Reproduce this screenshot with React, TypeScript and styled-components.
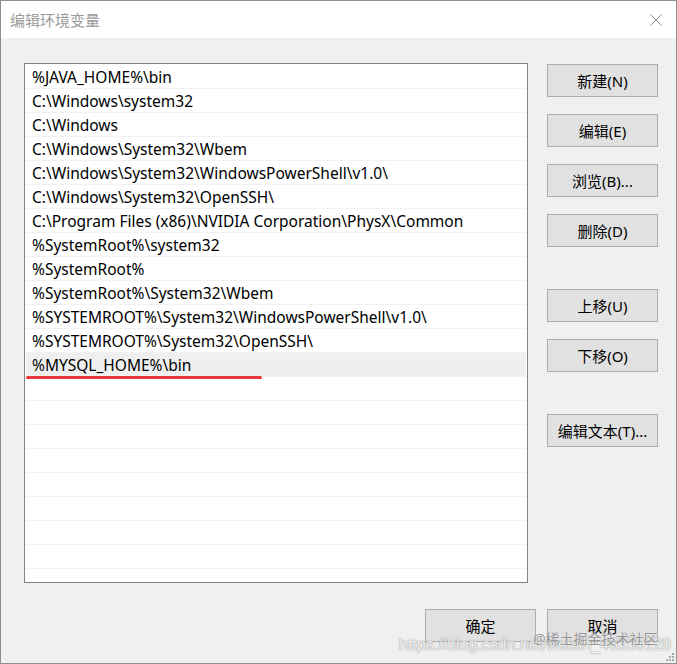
import styled, { createGlobalStyle } from 'styled-components';

const GlobalStyle = createGlobalStyle`
  html, body {
    margin: 0;
    padding: 0;
    background: #ffffff;
  }
  * {
    box-sizing: border-box;
  }
`;

const paths = [
  '%JAVA_HOME%\\bin',
  'C:\\Windows\\system32',
  'C:\\Windows',
  'C:\\Windows\\System32\\Wbem',
  'C:\\Windows\\System32\\WindowsPowerShell\\v1.0\\',
  'C:\\Windows\\System32\\OpenSSH\\',
  'C:\\Program Files (x86)\\NVIDIA Corporation\\PhysX\\Common',
  '%SystemRoot%\\system32',
  '%SystemRoot%',
  '%SystemRoot%\\System32\\Wbem',
  '%SYSTEMROOT%\\System32\\WindowsPowerShell\\v1.0\\',
  '%SYSTEMROOT%\\System32\\OpenSSH\\',
  '%MYSQL_HOME%\\bin',
];

const TOTAL_ROWS = 22;
const SELECTED = 12;

const sideButtons = [
  { label: '新建(N)', gap: 1 },
  { label: '编辑(E)', gap: 17 },
  { label: '浏览(B)...', gap: 17 },
  { label: '删除(D)', gap: 17 },
  { label: '上移(U)', gap: 42 },
  { label: '下移(O)', gap: 17 },
  { label: '编辑文本(T)...', gap: 42 },
];

export default function App() {
  const rows = Array.from({ length: TOTAL_ROWS }, (_, i) => paths[i] ?? '');

  return (
    <>
      <GlobalStyle />
      <Window>
        <TitleBar>
          <Title>编辑环境变量</Title>
          <CloseButton>
            <svg width="12" height="12" viewBox="0 0 12 12">
              <path d="M0.5 0.5 L11.5 11.5 M11.5 0.5 L0.5 11.5" stroke="#8a8a8a" strokeWidth="1" fill="none" />
            </svg>
          </CloseButton>
        </TitleBar>

        <Body>
          <Main>
            <ListBox>
              {rows.map((text, i) => (
                <Row key={i} selected={i === SELECTED}>
                  {text}
                  {i === SELECTED && <RedMark />}
                </Row>
              ))}
            </ListBox>

            <SideColumn>
              {sideButtons.map((b) => (
                <Button key={b.label} gap={b.gap}>
                  {b.label}
                </Button>
              ))}
            </SideColumn>
          </Main>

          <Footer>
            <Button gap={0}>确定</Button>
            <Button gap={0}>取消</Button>
          </Footer>
        </Body>

        {/* blog watermarks baked into the screenshot */}
        <Watermark>https://blog.csdn.net/weixin_46330128</Watermark>
        <Brand>@稀土掘金技术社区</Brand>
        <Grip>
          <svg width="10" height="10" viewBox="0 0 10 10">
            <rect x="7" y="1" width="2" height="2" fill="#a8a8a8" />
            <rect x="4" y="4" width="2" height="2" fill="#a8a8a8" />
            <rect x="7" y="4" width="2" height="2" fill="#a8a8a8" />
            <rect x="1" y="7" width="2" height="2" fill="#a8a8a8" />
            <rect x="4" y="7" width="2" height="2" fill="#a8a8a8" />
            <rect x="7" y="7" width="2" height="2" fill="#a8a8a8" />
          </svg>
        </Grip>
      </Window>
    </>
  );
}

const Window = styled.div`
  position: relative;
  width: 677px;
  height: 664px;
  border: 1px solid #8f8f8f;
  background-color: #f0f0f0;
  display: flex;
  flex-direction: column;
  overflow: hidden;
  font-family: 'Noto Sans', 'Noto Sans CJK SC', sans-serif;
`;

const TitleBar = styled.div`
  height: 37px;
  flex-shrink: 0;
  background-color: #ffffff;
  display: flex;
  align-items: center;
  justify-content: space-between;
  padding: 0 14px 0 9px;
`;

const Title = styled.div`
  font-size: 15px;
  color: #9a9a9a;
  font-family: 'Noto Sans CJK SC', sans-serif;
`;

const CloseButton = styled.div`
  display: flex;
  align-items: center;
  padding-top: 1px;
`;

const Body = styled.div`
  flex: 1;
  display: flex;
  flex-direction: column;
  padding: 25px 18px 0 23px;
`;

const Main = styled.div`
  display: flex;
  gap: 19px;
`;

const ListBox = styled.div`
  width: 504px;
  height: 520px;
  border: 1px solid #828282;
  background-color: #ffffff;
  padding: 1px;
  overflow: hidden;
`;

const Row = styled.div<{ selected: boolean }>`
  position: relative;
  height: 24px;
  line-height: 24px;
  padding-left: 6px;
  border-bottom: 1px solid #f2f2f2;
  background-color: ${(p) => (p.selected ? '#efefef' : '#ffffff')};
  font-size: 15.5px;
  color: #000000;
  white-space: nowrap;
`;

const RedMark = styled.span`
  position: absolute;
  left: 0;
  bottom: -3px;
  width: 236px;
  height: 3px;
  border-radius: 2px;
  background-color: #e5393a;
  z-index: 1;
`;

const SideColumn = styled.div`
  display: flex;
  flex-direction: column;
`;

const Button = styled.div<{ gap: number }>`
  width: 111px;
  height: 33px;
  margin-top: ${(p) => p.gap}px;
  background-color: #e1e1e1;
  border: 1px solid #adadad;
  display: flex;
  align-items: center;
  justify-content: center;
  font-size: 15px;
  color: #000000;
  white-space: nowrap;
`;

const Footer = styled.div`
  display: flex;
  justify-content: flex-end;
  gap: 11px;
  margin-top: 26px;
`;

const Watermark = styled.div`
  position: absolute;
  left: 398px;
  top: 635px;
  font-family: 'Liberation Sans', sans-serif;
  font-size: 16px;
  color: rgba(255, 255, 255, 0.85);
  text-shadow: 0 0 1px rgba(130, 130, 130, 0.9), 0 0 2px rgba(160, 160, 160, 0.6);
  white-space: nowrap;
  pointer-events: none;
`;

const Brand = styled.div`
  position: absolute;
  left: 532px;
  top: 627px;
  font-size: 14px;
  color: rgba(110, 110, 110, 0.7);
  text-shadow: 0 0 1px rgba(255, 255, 255, 0.8);
  white-space: nowrap;
  pointer-events: none;
`;

const Grip = styled.div`
  position: absolute;
  right: 1px;
  bottom: 1px;
  display: flex;
`;
